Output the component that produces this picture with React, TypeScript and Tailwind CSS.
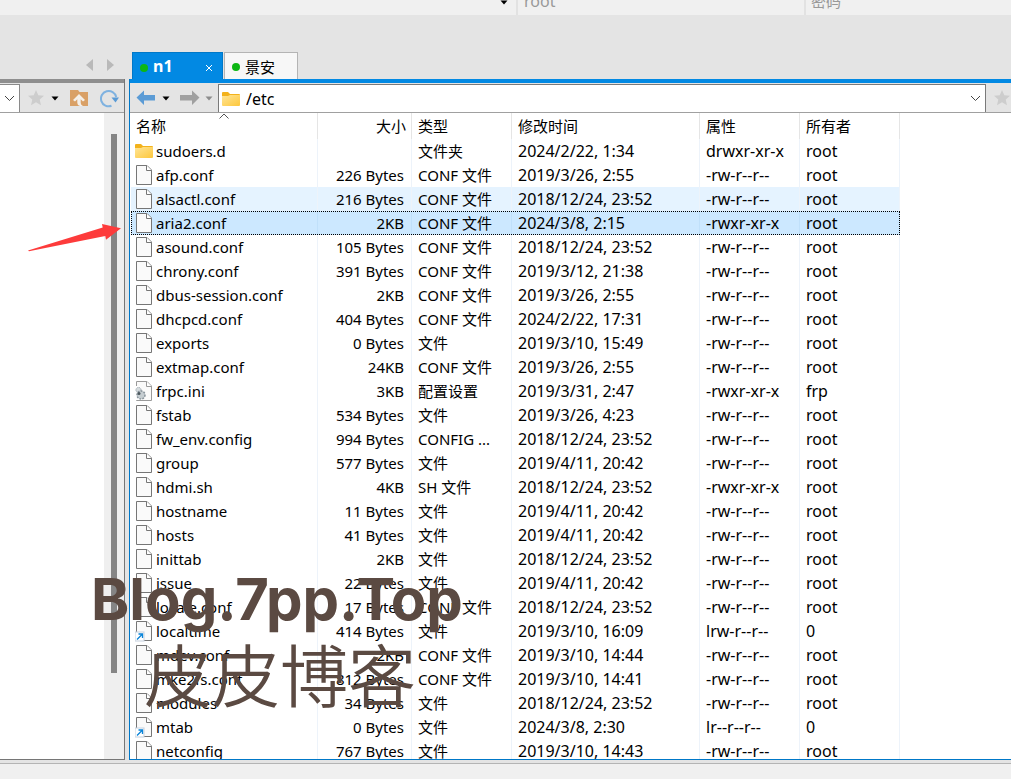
import type { ReactNode } from 'react';
import clsx from 'clsx';

type Kind = 'folder' | 'file' | 'ini' | 'link';
type Row = [name: string, size: string, type: string, date: string, attr: string, owner: string, kind?: Kind];

const ROWS: Row[] = [
  ['sudoers.d', '', '文件夹', '2024/2/22, 1:34', 'drwxr-xr-x', 'root', 'folder'],
  ['afp.conf', '226 Bytes', 'CONF 文件', '2019/3/26, 2:55', '-rw-r--r--', 'root'],
  ['alsactl.conf', '216 Bytes', 'CONF 文件', '2018/12/24, 23:52', '-rw-r--r--', 'root'],
  ['aria2.conf', '2KB', 'CONF 文件', '2024/3/8, 2:15', '-rwxr-xr-x', 'root'],
  ['asound.conf', '105 Bytes', 'CONF 文件', '2018/12/24, 23:52', '-rw-r--r--', 'root'],
  ['chrony.conf', '391 Bytes', 'CONF 文件', '2019/3/12, 21:38', '-rw-r--r--', 'root'],
  ['dbus-session.conf', '2KB', 'CONF 文件', '2019/3/26, 2:55', '-rw-r--r--', 'root'],
  ['dhcpcd.conf', '404 Bytes', 'CONF 文件', '2024/2/22, 17:31', '-rw-r--r--', 'root'],
  ['exports', '0 Bytes', '文件', '2019/3/10, 15:49', '-rw-r--r--', 'root'],
  ['extmap.conf', '24KB', 'CONF 文件', '2019/3/26, 2:55', '-rw-r--r--', 'root'],
  ['frpc.ini', '3KB', '配置设置', '2019/3/31, 2:47', '-rwxr-xr-x', 'frp', 'ini'],
  ['fstab', '534 Bytes', '文件', '2019/3/26, 4:23', '-rw-r--r--', 'root'],
  ['fw_env.config', '994 Bytes', 'CONFIG ...', '2018/12/24, 23:52', '-rw-r--r--', 'root'],
  ['group', '577 Bytes', '文件', '2019/4/11, 20:42', '-rw-r--r--', 'root'],
  ['hdmi.sh', '4KB', 'SH 文件', '2018/12/24, 23:52', '-rwxr-xr-x', 'root'],
  ['hostname', '11 Bytes', '文件', '2019/4/11, 20:42', '-rw-r--r--', 'root'],
  ['hosts', '41 Bytes', '文件', '2019/4/11, 20:42', '-rw-r--r--', 'root'],
  ['inittab', '2KB', '文件', '2018/12/24, 23:52', '-rw-r--r--', 'root'],
  ['issue', '22 Bytes', '文件', '2019/4/11, 20:42', '-rw-r--r--', 'root'],
  ['locale.conf', '17 Bytes', 'CONF 文件', '2018/12/24, 23:52', '-rw-r--r--', 'root'],
  ['localtime', '414 Bytes', '文件', '2019/3/10, 16:09', 'lrw-r--r--', '0', 'link'],
  ['mdev.conf', '2KB', 'CONF 文件', '2019/3/10, 14:44', '-rw-r--r--', 'root'],
  ['mke2fs.conf', '812 Bytes', 'CONF 文件', '2019/3/10, 14:41', '-rw-r--r--', 'root'],
  ['modules', '34 Bytes', '文件', '2018/12/24, 23:52', '-rw-r--r--', 'root'],
  ['mtab', '0 Bytes', '文件', '2024/3/8, 2:30', 'lr--r--r--', '0', 'link'],
  ['netconfig', '767 Bytes', '文件', '2019/3/10, 14:43', '-rw-r--r--', 'root'],
];

const HEADERS = ['名称', '大小', '类型', '修改时间', '属性', '所有者'];
const HOVERED = 2;
const SELECTED = 3;

function FolderIcon() {
  return (
    <svg width="18" height="14" viewBox="0 0 18 14" className="shrink-0">
      <defs>
        <linearGradient id="folder" x1="0" y1="0" x2="1" y2="1">
          <stop offset="0" stopColor="#ffe596" />
          <stop offset="1" stopColor="#fdc73c" />
        </linearGradient>
      </defs>
      <path d="M0 1Q0 0 1 0H6L8 2H17Q18 2 18 3V7H0Z" fill="#f3b21b" />
      <path d="M0 4H6L8 3H18V13Q18 14 17 14H1Q0 14 0 13Z" fill="url(#folder)" />
    </svg>
  );
}

function FileIcon({ kind }: { kind: Kind }) {
  const stroke = kind === 'ini' ? '#9a9a9a' : '#767676';
  return (
    <svg width="18" height="22" viewBox="0 0 18 22" className="shrink-0">
      <path d="M1.5 1.5H12L16.5 6V20.5H1.5Z" fill="#fafafa" stroke={stroke} />
      <path d="M11.5 1.5V6.5H16.5" fill="#fff" stroke={stroke} />
      {kind === 'link' && (
        <g>
          <rect x="0" y="12" width="9" height="9" fill="#fff" stroke="#c4cfdd" />
          <path d="M2 19.5L7 14.5M3.5 14H7.5V18" fill="none" stroke="#0a84d8" strokeWidth="1.3" />
        </g>
      )}
      {kind === 'ini' && (
        <g>
          <path d="M0 6H5V20H0Z" fill="#fff" />
          <circle cx="3.5" cy="10" r="2.6" fill="#d5dbde" stroke="#9aa4aa" strokeDasharray="1.4 1" />
          <circle cx="6" cy="15" r="4" fill="#c5cdd1" stroke="#87929a" strokeWidth="1.5" strokeDasharray="1.8 1.2" />
          <circle cx="4" cy="13.5" r="1.5" fill="#4b565d" />
        </g>
      )}
    </svg>
  );
}

function StarIcon() {
  return (
    <svg width="18" height="18" viewBox="0 0 18 18" className="shrink-0">
      <path d="M9 1L11.3 6.3L17 6.7L12.7 10.5L14 16.2L9 13.2L4 16.2L5.3 10.5L1 6.7L6.7 6.3Z" fill="#cdcdcd" />
    </svg>
  );
}

function Caret({ muted = false }: { muted?: boolean }) {
  return (
    <svg width="8" height="5" viewBox="0 0 8 5" className="shrink-0">
      <path d="M0.5 0.5H7.5L4 4.5Z" fill={muted ? '#8c8c8c' : '#000'} />
    </svg>
  );
}

function Chevron() {
  return (
    <svg width="11" height="7" viewBox="0 0 11 7" className="shrink-0">
      <path d="M1 1L5.5 5.5L10 1" fill="none" stroke="#444" />
    </svg>
  );
}

function ArrowIcon({ back = false }: { back?: boolean }) {
  return (
    <svg width="20" height="16" viewBox="0 0 20 16" className="shrink-0">
      {back ? (
        <path d="M0.5 7.5L8 0.5V5H19V10.5H8V15Z" fill="#5b9bd5" />
      ) : (
        <path d="M19.5 7.5L12 0.5V5H0V10.5H12V15Z" fill="#a0a0a0" />
      )}
    </svg>
  );
}

function IconButton({ label, children, className }: { label: string; children: ReactNode; className?: string }) {
  return (
    <button type="button" aria-label={label} className={clsx('flex h-6 shrink-0 items-center justify-center', className)}>
      {children}
    </button>
  );
}

function LocalPane() {
  return (
    <section className="flex w-[125px] shrink-0 flex-col border-r border-b border-[#767676]">
      <div className="flex h-[34px] shrink-0 items-end border-t-4 border-b border-t-[#8e8e8e] border-b-[#a0a0a0]">
        <IconButton label="本地路径" className="h-[28px] w-5 border-t border-r border-[#8a8a8a] bg-white">
          <Chevron />
        </IconButton>
        <div className="flex h-[28px] items-center pl-[7px]">
          <IconButton label="收藏"><StarIcon /></IconButton>
          <IconButton label="收藏列表" className="ml-[6px] w-2"><Caret /></IconButton>
          <IconButton label="上级目录" className="ml-[11px]">
            <svg width="18" height="16" viewBox="0 0 18 16">
              <path d="M0 0H8L9.5 2H18V16H0Z" fill="#d9a066" />
              <path d="M9 4L15 10L13 11.5L10.7 9.3V13Q10.8 15 13 16H10Q7.4 15.5 7.3 13V9.3L5 11.5L3 10Z" fill="#f4efe9" />
            </svg>
          </IconButton>
          <IconButton label="刷新" className="ml-3">
            <svg width="19" height="19" viewBox="0 0 19 19">
              <path d="M11.5 16.8A7.7 7.7 0 1 1 16.2 8" fill="none" stroke="#7fb2e0" strokeWidth="2" />
              <path d="M11.5 8.5H19L15.5 13.5Z" fill="#5b9bd5" />
            </svg>
          </IconButton>
        </div>
      </div>
      <div className="flex flex-1 bg-white">
        <div className="flex-1" />
        <div className="w-5 bg-[#efefef] pt-[21px] pl-[7px]">
          <div className="h-[539px] w-[6px] bg-[#858585]" />
        </div>
      </div>
    </section>
  );
}

function FileTable() {
  return (
    <table className="ml-px w-[769px] table-fixed border-separate border-spacing-0 text-left whitespace-nowrap">
      <colgroup>
        <col className="w-[187px]" />
        <col className="w-[94px]" />
        <col className="w-[100px]" />
        <col className="w-[188px]" />
        <col className="w-[100px]" />
        <col className="w-[100px]" />
      </colgroup>
      <thead>
        <tr className="h-[26px]">
          {HEADERS.map((title, i) => (
            <th
              key={title}
              className={clsx(
                'relative border-r border-[#e5e5e5] p-0 font-normal',
                i === 0 ? 'pl-[5px]' : i === 1 ? 'pr-[5px] text-right' : 'pl-[6px]',
              )}
            >
              {title}
              {i === 0 && (
                <svg width="10" height="6" viewBox="0 0 10 6" className="absolute top-0 left-1/2 -translate-x-1/2">
                  <path d="M0.5 5.5L5 1L9.5 5.5" fill="none" stroke="#555" />
                </svg>
              )}
            </th>
          ))}
        </tr>
      </thead>
      <tbody>
        {ROWS.map(([name, size, type, date, attr, owner, kind = 'file'], i) => (
          <tr
            key={name}
            className={clsx(
              'h-6 [&>td]:border-r [&>td]:border-[#edf3fa] [&>td]:p-0 [&>td]:leading-[22px]',
              i === HOVERED && 'bg-[#e5f3ff]',
              i === SELECTED && 'bg-[#cce8ff] outline-1 -outline-offset-1 outline-dotted outline-black [&>td]:border-[#c0e0fa]!',
            )}
          >
            <td>
              <div className="flex h-[22px] items-center gap-[3px] pl-1">
                {kind === 'folder' ? <FolderIcon /> : <FileIcon kind={kind} />}
                {name}
              </div>
            </td>
            <td className="text-right"><span className="pr-[7px]">{size}</span></td>
            <td><span className="pl-[6px]">{type}</span></td>
            <td className="text-[16px]"><span className="pl-[6px]">{date}</span></td>
            <td className="text-[16px]"><span className="pl-[6px]">{attr}</span></td>
            <td className="text-[16px]"><span className="pl-[6px]">{owner}</span></td>
          </tr>
        ))}
      </tbody>
    </table>
  );
}

function RemotePane() {
  return (
    <section className="flex min-w-0 flex-1 flex-col overflow-hidden border-b border-l border-[#0078c8]">
      <div className="flex h-[34px] shrink-0 items-end border-t-4 border-b border-t-[#0289e3] border-b-[#a0a0a0]">
        <div className="flex h-[28px] items-center pl-[6px]">
          <IconButton label="后退"><ArrowIcon back /></IconButton>
          <IconButton label="后退历史" className="ml-[6px]"><Caret /></IconButton>
          <IconButton label="前进" className="ml-[10px]"><ArrowIcon /></IconButton>
          <IconButton label="前进历史" className="ml-[5px]"><Caret muted /></IconButton>
        </div>
        <label className="ml-[5px] flex h-[28px] min-w-0 flex-1 items-center gap-[6px] border-x border-t border-[#7a7a7a] bg-white pr-1 pl-[3px]">
          <FolderIcon />
          <input aria-label="远程路径" defaultValue="/etc" className="min-w-0 flex-1 text-[16px] outline-none" />
          <Chevron />
        </label>
        <IconButton label="收藏远程路径" className="h-[28px] w-[25px] justify-end!"><StarIcon /></IconButton>
      </div>
      <div className="min-h-0 flex-1 overflow-hidden bg-white">
        <FileTable />
      </div>
    </section>
  );
}

export default function App() {
  return (
    <div className="relative flex h-screen flex-col overflow-hidden bg-[#e4e4e4] font-['Noto_Sans','Noto_Sans_CJK_SC',sans-serif] text-[15px] text-black">
      {/* Session bar */}
      <header className="flex h-[15px] shrink-0 items-end overflow-hidden bg-[#f0f0f0] text-[#999]">
        <div className="flex h-[15px] w-[518px] shrink-0 justify-end border-r-2 border-[#e2e2e2] pr-2">
          <Caret />
        </div>
        <div className="flex h-7 w-[288px] shrink-0 border-r-2 border-[#e2e2e2]">
          <input aria-label="用户名" defaultValue="root" className="min-w-0 flex-1 pl-[6px] text-[16px] outline-none" />
        </div>
        <input aria-label="密码" type="password" placeholder="密码" className="h-7 min-w-0 flex-1 pl-[5px] outline-none placeholder:text-[#999]" />
      </header>

      {/* Tabs */}
      <nav className="flex h-16 shrink-0 items-end">
        <div className="flex w-[132px] shrink-0 justify-end gap-[14px] self-end pr-[18px] pb-2">
          <button type="button" aria-label="上一个标签">
            <svg width="7" height="12" viewBox="0 0 7 12"><path d="M7 0V12L0 6Z" fill="#b9b9b9" /></svg>
          </button>
          <button type="button" aria-label="下一个标签">
            <svg width="7" height="12" viewBox="0 0 7 12"><path d="M0 0V12L7 6Z" fill="#b9b9b9" /></svg>
          </button>
        </div>
        <div className="flex h-[27px] w-[91px] items-center border border-b-0 border-[#0078c8] bg-[#0289e3] pt-[3px] pr-[9px] pl-[7px] font-bold text-white">
          <span className="mr-[5px] size-2 rounded-full bg-[#0db714]" />
          <button type="button" className="pb-[3px] text-[16px] leading-5">n1</button>
          <button type="button" aria-label="关闭" className="ml-auto">
            <svg width="8" height="8" viewBox="0 0 8 8"><path d="M1 1L7 7M7 1L1 7" stroke="#fff" /></svg>
          </button>
        </div>
        <button type="button" className="ml-px flex h-[27px] w-[74px] items-center gap-[5px] border border-b-0 border-[#b4b4b4] bg-[#f7f7f7] pt-[2px] pl-[7px]">
          <span className="size-2 rounded-full bg-[#0db714]" />
          景安
        </button>
      </nav>

      <main className="flex min-h-0 flex-1 gap-1">
        <LocalPane />
        <RemotePane />
      </main>

      <footer className="mt-[3px] h-4 shrink-0 border-t border-[#b4b4b4] bg-[#f0f0f0]" />

      {/* Pointer to the edited file */}
      <svg width="94" height="30" viewBox="0 0 94 30" className="pointer-events-none absolute top-[223px] left-[28px]">
        <path d="M0 27.6L74.7 4.5L74 1L93 5.3L78 16.7L77.3 13L1 28.2Z" fill="#fd3b3b" />
      </svg>

      {/* Watermark */}
      <div className="pointer-events-none absolute top-[561px] left-[91px] whitespace-nowrap text-[#5b4a42]">
        <div className="font-[family-name:Inter] text-[58px] leading-[76px] font-bold">Blog.7pp.Top</div>
        <div className="pl-[53px] font-['Noto_Sans_CJK_SC',sans-serif] text-[68px] leading-[72px] font-[350]">皮皮博客</div>
      </div>
    </div>
  );
}
